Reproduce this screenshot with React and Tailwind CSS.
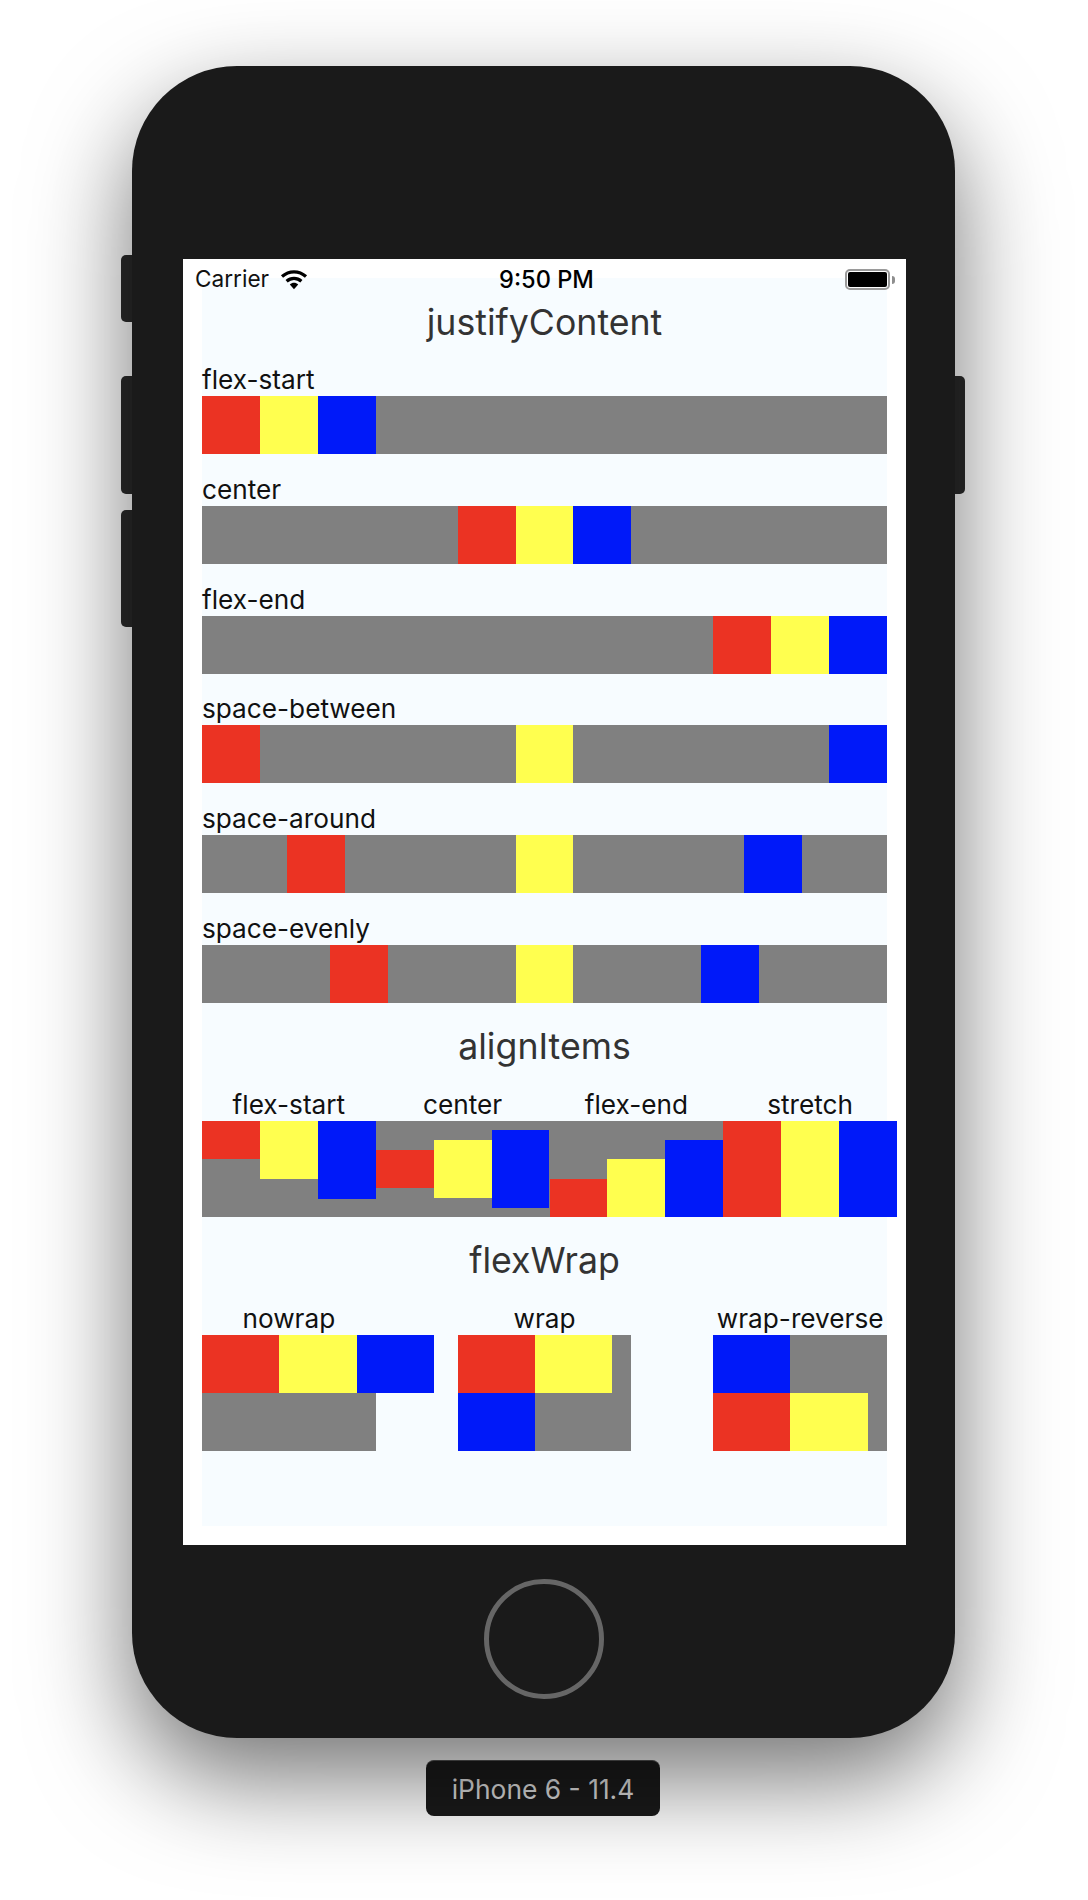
const RED = "bg-[#eb3323]";
const YELLOW = "bg-[#ffff4f]";
const BLUE = "bg-[#0019f9]";
const font = "font-['Inter',sans-serif]";

function Square({ color, className = "w-[57.9px] h-[57.9px]" }) {
  return <div className={`${color} shrink-0 ${className}`} />;
}

function Title({ children, className = "pb-[5px]" }) {
  return (
    <div className={`h-[93px] flex items-center justify-center text-[35.7px] text-[#333333] leading-none ${className}`}>
      {children}
    </div>
  );
}

function Label({ children, className = "" }) {
  return <div className={`h-[25px] leading-[18px] text-[26.2px] text-[#111111] whitespace-nowrap ${className}`}>{children}</div>;
}

const justifyRows = [
  ["flex-start", "justify-start"],
  ["center", "justify-center"],
  ["flex-end", "justify-end"],
  ["space-between", "justify-between"],
  ["space-around", "justify-around"],
  ["space-evenly", "justify-evenly"],
];

const alignCols = [
  ["flex-start", "items-start"],
  ["center", "items-center"],
  ["flex-end", "items-end"],
  ["stretch", "items-stretch"],
];

function JustifySection() {
  return (
    <div className="flex flex-col gap-[26.95px]">
      {justifyRows.map(([name, cls]) => (
        <div key={name}>
          <Label>{name}</Label>
          <div className={`flex h-[57.9px] bg-[#808080] ${cls}`}>
            <Square color={RED} />
            <Square color={YELLOW} />
            <Square color={BLUE} />
          </div>
        </div>
      ))}
    </div>
  );
}

function AlignSection() {
  return (
    <div className="flex w-[695px]">
      {alignCols.map(([name, cls]) => {
        const stretch = name === "stretch";
        return (
          <div key={name} className="w-[173.75px]">
            <Label className="text-center">{name}</Label>
            <div className={`flex h-[96px] bg-[#808080] ${cls}`}>
              <Square color={RED} className={stretch ? "w-[57.9px]" : "w-[57.9px] h-[38px]"} />
              <Square color={YELLOW} className={stretch ? "w-[57.9px]" : "w-[57.9px] h-[58px]"} />
              <Square color={BLUE} className={stretch ? "w-[57.9px]" : "w-[57.9px] h-[77.5px]"} />
            </div>
          </div>
        );
      })}
    </div>
  );
}

function WrapSection() {
  const wide = "w-[77.25px] h-[57.9px]";
  const size = "w-[77.1px] h-[57.9px]";
  return (
    <div className="flex justify-between">
      <div className="w-[173.7px]">
        <Label className="text-center">nowrap</Label>
        <div className="flex flex-nowrap items-start h-[115.8px] bg-[linear-gradient(to_bottom,transparent_50%,#808080_50%)]">
          <Square color={RED} className={wide} />
          <Square color={YELLOW} className={wide} />
          <Square color={BLUE} className={wide} />
        </div>
      </div>
      <div className="w-[173.7px]">
        <Label className="text-center">wrap</Label>
        <div className="flex flex-wrap content-start h-[115.8px] bg-[#808080]">
          <Square color={RED} className={size} />
          <Square color={YELLOW} className={size} />
          <Square color={BLUE} className={size} />
        </div>
      </div>
      <div className="w-[173.7px]">
        <Label className="text-center">wrap-reverse</Label>
        <div className="flex flex-wrap-reverse content-start h-[115.8px] bg-[#808080]">
          <Square color={RED} className={size} />
          <Square color={YELLOW} className={size} />
          <Square color={BLUE} className={size} />
        </div>
      </div>
    </div>
  );
}

function Wifi() {
  return (
    <svg width="28" height="21" viewBox="0 0 28 21" className="block">
      <path d="M2 7.5 C9 1.2 19 1.2 26 7.5" fill="none" stroke="#000" strokeWidth="3.2" />
      <path d="M6.6 12.2 C11 8.3 17 8.3 21.4 12.2" fill="none" stroke="#000" strokeWidth="3.2" />
      <path d="M9.8 15.6 C12.2 13.2 15.8 13.2 18.2 15.6 L14 20.2 Z" fill="#000" />
    </svg>
  );
}

function StatusBar() {
  return (
    <div className="absolute left-0 right-0 top-0 h-[41px] flex items-center justify-between pl-[12px] pr-[11px] text-[#111111]">
      <div className="flex items-center gap-[11px] w-[150px]">
        <span className="text-[22.6px] leading-none">Carrier</span>
        <Wifi />
      </div>
      <span className="text-[23.6px] leading-none font-medium text-black ml-[3px]">9:50 PM</span>
      <div className="flex items-center justify-end w-[150px]">
        <div className="w-[45px] h-[21px] rounded-[5px] border-2 border-[#9a9a9a] p-px bg-white">
          <div className="w-full h-full bg-black rounded-[2px]" />
        </div>
        <div className="ml-[2px] w-[3px] h-[8px] rounded-r-[3px] bg-[#8e8e8e]" />
      </div>
    </div>
  );
}

function SideButton({ className }) {
  return <div className={`absolute w-[32px] bg-[#2b2b2b] rounded-[5px] ${className}`} />;
}

export default function App() {
  return (
    <div className={`w-full h-[1900px] pt-[66px] bg-white overflow-hidden ${font}`}>
      <div className="relative w-[823px] h-[1672px] ml-[132px]">
        <SideButton className="left-[-11px] top-[189px] h-[67px]" />
        <SideButton className="left-[-11px] top-[310px] h-[118px]" />
        <SideButton className="left-[-11px] top-[444px] h-[117px]" />
        <SideButton className="right-[-10px] top-[310px] h-[118px]" />

        <div className="relative h-full w-full flex flex-col items-start rounded-[105px] bg-[#1a1a1a] pt-[193px] shadow-[0_40px_100px_rgba(0,0,0,0.55)]">
          <div className="relative ml-[51px] w-[723px] h-[1286px] bg-white px-[19px] pt-[19px]">
            <div className="h-[1248px] bg-[#f7fcff] w-[685px]">
              <Title className="pb-[3px]">justifyContent</Title>
              <JustifySection />
              <Title>alignItems</Title>
              <AlignSection />
              <Title>flexWrap</Title>
              <WrapSection />
            </div>
            <StatusBar />
          </div>
          <div className="mt-[34px] self-center w-[120px] h-[120px] rounded-full border-[5px] border-[#666666]" />
        </div>
      </div>
      <div className="ml-[426px] mt-[22px] w-[234px] h-[56px] pt-[3px] rounded-[8px] bg-[#1a1a1a] border-t border-[#555555] flex items-center justify-center text-[26.4px] text-[#dddddd]">
        iPhone 6 - 11.4
      </div>
    </div>
  );
}
